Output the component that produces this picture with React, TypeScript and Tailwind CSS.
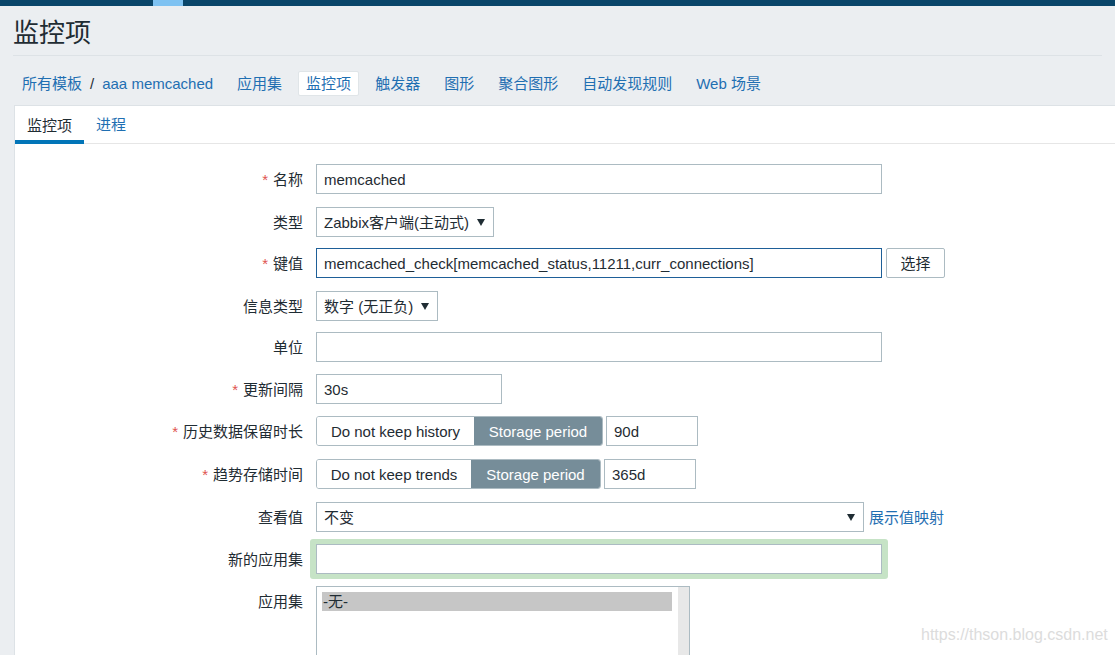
import React from "react";

const FONT = { fontFamily: '"Liberation Sans", Arial, "Noto Sans CJK SC", sans-serif' };

function Arrow() {
  return (
    <svg width="8" height="7" viewBox="0 0 8 7" className="shrink-0">
      <path d="M0 0 H8 L4 7 Z" fill="#1f2c33" />
    </svg>
  );
}

function Row({
  label,
  required,
  mt,
  children,
}: {
  label: string;
  required?: boolean;
  mt: string;
  children: React.ReactNode;
}) {
  return (
    <div className={`flex items-center h-[30px] ${mt}`}>
      <div className="w-[288px] text-right text-[15px] leading-none text-[#1f2c33] shrink-0">
        {required && <span className="text-[#e0534f] mr-[5px]">*</span>}
        {label}
      </div>
      <div className="ml-[13px] flex items-center h-full">{children}</div>
    </div>
  );
}

const inputCls =
  "h-[30px] border border-[#acbbc2] bg-white flex items-center pl-[7px] text-[15px] text-[#1f2c33] leading-none";

export default function App() {
  const crumbs = ["应用集", "监控项", "触发器", "图形", "聚合图形", "自动发现规则", "Web 场景"];
  return (
    <div className="relative w-[1115px] h-[655px] overflow-hidden bg-[#ebeef1]" style={FONT}>
      {/* top bar */}
      <div className="h-[6px] bg-[#0a466a] flex">
        <div className="ml-[153px] w-[30px] h-full bg-[#7ec2f2]" />
      </div>
      {/* title */}
      <div className="mx-[13px] h-[50px] border-b border-[#dde2e6] flex items-center">
        <h1 className="text-[26px] leading-none text-[#1f2c33] pt-[5px]">监控项</h1>
      </div>
      {/* breadcrumbs */}
      <div className="h-[49px] pl-[14px] pt-[15px] flex items-start">
        <div className="h-[25px] px-2 flex items-center text-[15px] leading-none">
          <span className="text-[#1f6fb2]">所有模板</span>
          <span className="text-[#1f2c33] mx-[8px]">/</span>
          <span className="text-[#1f6fb2]">aaa memcached</span>
        </div>
        {crumbs.map((c) => (
          <div
            key={c}
            className={`ml-[8px] h-[25px] px-2 flex items-center text-[15px] leading-none text-[#1f6fb2] rounded-[2px] ${
              c === "监控项" ? "bg-white border border-[#e0e5e8] px-[7px]" : ""
            }`}
          >
            {c}
          </div>
        ))}
      </div>
      {/* panel */}
      <div className="ml-[14px] h-[560px] bg-white border-l border-t border-[#dde2e6]">
        <div className="h-[38px] border-b border-[#e6e6e6] flex items-stretch">
          <div className="px-[12px] flex items-center text-[15px] leading-none text-[#1f2c33] border-b-[4px] border-[#0275b8] -mb-px pt-[4px]">
            监控项
          </div>
          <div className="px-[12px] flex items-center text-[15px] leading-none text-[#1f6fb2]">
            进程
          </div>
        </div>

        <div className="pt-[20px] flex flex-col">
          <Row label="名称" required mt="mt-0">
            <div className={`${inputCls} w-[566px]`}>memcached</div>
          </Row>
          <Row label="类型" mt="mt-[13px]">
            <div className={`${inputCls} w-[178px] pl-[5px] pr-[8px] justify-between`}>
              <span>Zabbix客户端(主动式)</span>
              <Arrow />
            </div>
          </Row>
          <Row label="键值" required mt="mt-[11px]">
            <div className="h-[30px] w-[566px] border border-[#1e5f98] bg-white flex items-center pl-[7px] text-[15px] text-[#1f2c33] leading-none">
              memcached_check[memcached_status,11211,curr_connections]
            </div>
            <div className="ml-[4px] h-[30px] w-[59px] border border-[#acbbc2] rounded-[2px] bg-white flex items-center justify-center text-[15px] text-[#1f2c33] leading-none">
              选择
            </div>
          </Row>
          <Row label="信息类型" mt="mt-[13px]">
            <div className={`${inputCls} w-[122px] pl-[5px] pr-[8px] justify-between`}>
              <span>数字 (无正负)</span>
              <Arrow />
            </div>
          </Row>
          <Row label="单位" mt="mt-[11px]">
            <div className={`${inputCls} w-[566px]`} />
          </Row>
          <Row label="更新间隔" required mt="mt-[12px]">
            <div className={`${inputCls} w-[186px]`}>30s</div>
          </Row>
          <Row label="历史数据保留时长" required mt="mt-[12px]">
            <div className="h-[30px] flex border border-[#acbbc2] rounded-[3px] overflow-hidden text-[15px] leading-none">
              <div className="w-[157px] bg-white flex items-center justify-center text-[#1f2c33]">Do not keep history</div>
              <div className="w-[128px] bg-[#768d99] flex items-center justify-center text-white">Storage period</div>
            </div>
            <div className={`${inputCls} ml-[3px] w-[92px]`}>90d</div>
          </Row>
          <Row label="趋势存储时间" required mt="mt-[13px]">
            <div className="h-[30px] flex border border-[#acbbc2] rounded-[3px] overflow-hidden text-[15px] leading-none">
              <div className="w-[154px] bg-white flex items-center justify-center text-[#1f2c33]">Do not keep trends</div>
              <div className="w-[129px] bg-[#768d99] flex items-center justify-center text-white">Storage period</div>
            </div>
            <div className={`${inputCls} ml-[3px] w-[92px]`}>365d</div>
          </Row>
          <Row label="查看值" mt="mt-[13px]">
            <div className={`${inputCls} w-[548px] pl-[5px] pr-[8px] justify-between`}>
              <span>不变</span>
              <Arrow />
            </div>
            <span className="ml-[5px] text-[15px] leading-none text-[#1f6fb2]">展示值映射</span>
          </Row>
          <Row label="新的应用集" mt="mt-[12px]">
            <div className="-ml-[6px] -my-[5px] px-[6px] py-[5px] bg-[#c6e3c6] rounded-[3px]">
              <div className={`${inputCls} w-[566px]`} />
            </div>
          </Row>
          <div className="flex items-start mt-[12px]">
            <div className="w-[288px] h-[30px] flex items-center justify-end text-[15px] leading-none text-[#1f2c33] shrink-0">
              应用集
            </div>
            <div className="ml-[13px] w-[374px] h-[120px] border border-[#acbbc2] bg-white flex">
              <div className="flex-1 pl-[5px] pt-[5px]">
                <div className="h-[19px] w-[350px] bg-[#c6c6c6] flex items-center pl-[1px] text-[15px] leading-none text-[#1f2c33]">
                  -无-
                </div>
              </div>
              <div className="w-[11px] h-full bg-[#e8e8e8]" />
            </div>
          </div>
        </div>
      </div>
      {/* watermark */}
      <div className="absolute left-[921px] top-[627px] text-[16px] leading-none text-[#dcdcdc]">
        https://thson.blog.csdn.net
      </div>
    </div>
  );
}
